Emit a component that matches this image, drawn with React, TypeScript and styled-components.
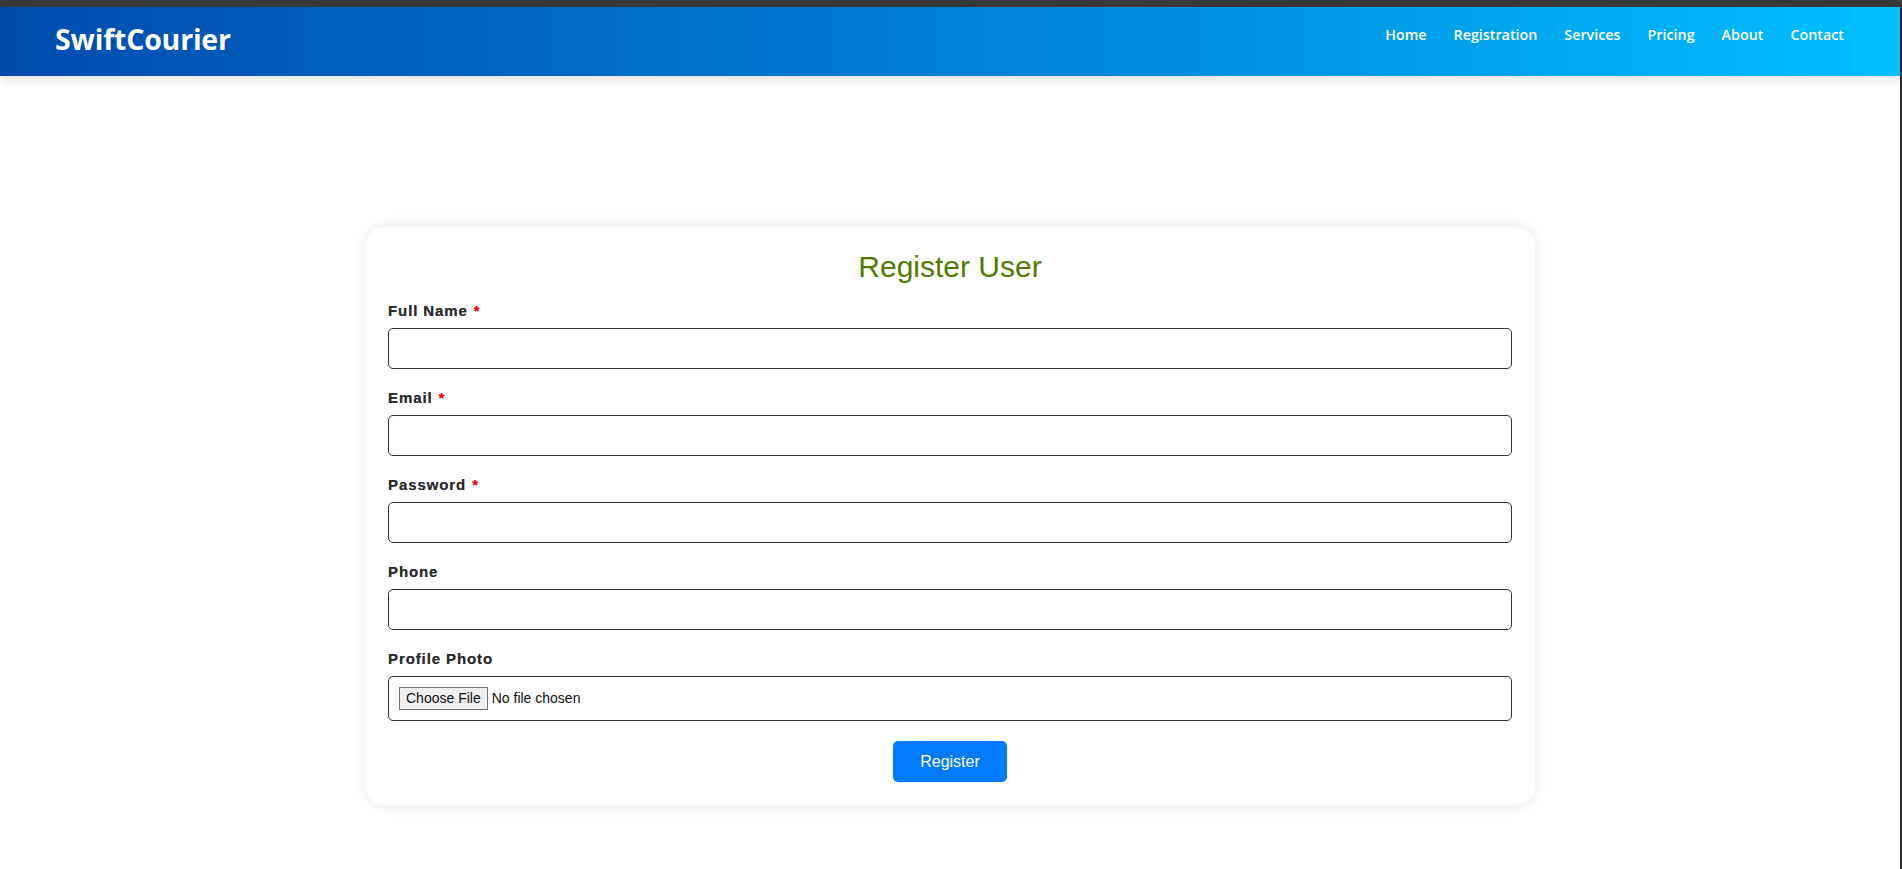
import React from "react";
import styled, { createGlobalStyle } from "styled-components";

const GlobalStyle = createGlobalStyle`
  html, body { margin: 0; padding: 0; background: #ffffff; }
  body { font-family: "Liberation Sans", Arial, sans-serif; }
  * { box-sizing: border-box; }
`;

const Frame = styled.div`
  min-height: 100vh;
  border-top: 7px solid #3a3a3a;
  border-right: 2px solid #2e2e2e;
  background: #ffffff;
`;

const Header = styled.header`
  height: 69px;
  display: flex;
  align-items: center;
  justify-content: space-between;
  padding: 0 56px 0 55px;
  background: linear-gradient(90deg, #004cad 0%, #0079d0 45%, #00bfff 100%);
  box-shadow: 0 3px 10px rgba(0, 0, 0, 0.12);
  position: relative;
  z-index: 1;
`;

const Logo = styled.div`
  font-family: "Open Sans", "Noto Sans", sans-serif;
  font-weight: 700;
  font-size: 28.5px;
  color: #ffffff;
  margin-bottom: 5px;
  letter-spacing: -0.2px;
`;

const Nav = styled.nav`
  display: flex;
  gap: 27px;
  margin-bottom: 13px;
`;

const NavLink = styled.a`
  font-family: "Open Sans", "Noto Sans", sans-serif;
  font-weight: 600;
  font-size: 14.3px;
  color: #ffffff;
  text-decoration: none;
  line-height: 20px;
`;

const Main = styled.main`
  padding: 151px 0 40px;
`;

const Card = styled.form`
  max-width: 1170px;
  margin: 0 auto;
  background: #ffffff;
  border-radius: 20px;
  box-shadow: 0 0 16px rgba(0, 0, 0, 0.08);
  padding: 23px 23px 23px;
`;

const Title = styled.h2`
  margin: 2px 0 20px;
  text-align: center;
  font-family: "Liberation Sans", Arial, sans-serif;
  font-weight: 400;
  font-size: 30px;
  line-height: 30px;
  color: #557a00;
`;

const Group = styled.div`
  margin-bottom: 20px;
`;

const Label = styled.label`
  display: block;
  font-family: "Liberation Sans", Arial, sans-serif;
  font-weight: 700;
  font-size: 15px;
  line-height: 18px;
  letter-spacing: 0.9px;
  color: #2b2b2b;
  text-shadow: 0 0 0.6px rgba(0, 0, 0, 0.6);
  margin-bottom: 8px;
`;

const Req = styled.span`
  color: #ff0000;
  margin-left: 1px;
`;

const TextInput = styled.input`
  display: block;
  width: 100%;
  height: 41px;
  border: 1px solid #333333;
  border-radius: 5px;
  padding: 10px;
  font-family: "Liberation Sans", Arial, sans-serif;
  font-size: 16px;
  background: #ffffff;
  outline: none;
`;

const FileInput = styled.input`
  display: block;
  width: 100%;
  height: 45px;
  border: 1px solid #333333;
  border-radius: 5px;
  padding: 10px;
  font-family: "Liberation Sans", Arial, sans-serif;
  font-size: 14px;
  line-height: 17px;
  color: #111111;
  background: #ffffff;

  &::file-selector-button {
    font-family: "Liberation Sans", Arial, sans-serif;
    font-size: 14px;
    line-height: 17px;
    padding: 2px 6px;
    margin-right: 4px;
    color: #111111;
    background: #efefef;
    border: 1px solid #767676;
    border-radius: 0;
  }
`;

const Actions = styled.div`
  display: flex;
  justify-content: center;
`;

const SubmitButton = styled.button`
  font-family: "Liberation Sans", Arial, sans-serif;
  font-size: 16px;
  line-height: 17px;
  padding: 12px 27px;
  color: #ffffff;
  background: #007bff;
  border: none;
  border-radius: 5px;
  cursor: pointer;
`;

type Field = { label: string; type: string; required?: boolean };

const fields: Field[] = [
  { label: "Full Name", type: "text", required: true },
  { label: "Email", type: "email", required: true },
  { label: "Password", type: "password", required: true },
  { label: "Phone", type: "tel" },
];

const navItems = ["Home", "Registration", "Services", "Pricing", "About", "Contact"];

export default function App() {
  return (
    <>
      <GlobalStyle />
      <Frame>
        <Header>
          <Logo>SwiftCourier</Logo>
          <Nav>
            {navItems.map((n) => (
              <NavLink key={n} href="#">
                {n}
              </NavLink>
            ))}
          </Nav>
        </Header>
        <Main>
          <Card onSubmit={(e) => e.preventDefault()}>
            <Title>Register User</Title>
            {fields.map((f) => (
              <Group key={f.label}>
                <Label>
                  {f.label}
                  {f.required && <Req> *</Req>}
                </Label>
                <TextInput type={f.type} />
              </Group>
            ))}
            <Group>
              <Label>Profile Photo</Label>
              <FileInput type="file" />
            </Group>
            <Actions>
              <SubmitButton type="submit">Register</SubmitButton>
            </Actions>
          </Card>
        </Main>
      </Frame>
    </>
  );
}
